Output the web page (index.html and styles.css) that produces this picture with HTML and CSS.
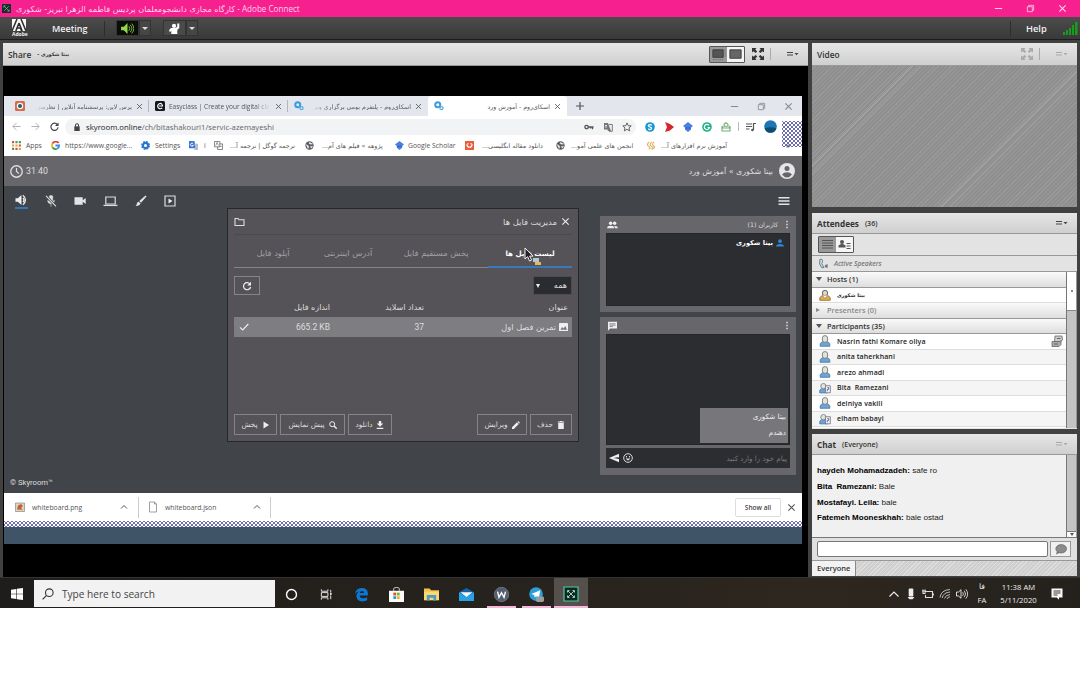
FILE: index.html
```html
<!DOCTYPE html>
<html lang="en">
<head>
    <meta charset="utf-8">
    <title>Adobe Connect</title>
    <link rel="stylesheet" href="styles.css">
</head>
<body>

<!-- shared icons -->
<svg class="defs" width="0" height="0">
    <symbol id="x" viewBox="0 0 10 10"><path d="M1.5 1.5l7 7M8.5 1.5l-7 7" fill="none" stroke="currentColor" stroke-width="1.2"/></symbol>
    <symbol id="min" viewBox="0 0 10 10"><path d="M1 5h8" stroke="currentColor" stroke-width="1.1"/></symbol>
    <symbol id="restore" viewBox="0 0 10 10"><path d="M1.5 3h5.5v5.5H1.5zM3 3V1.5h5.5V7H7" fill="none" stroke="currentColor" stroke-width=".9"/></symbol>
    <symbol id="expand" viewBox="0 0 12 12"><path d="M0 0h4.5L3.3 1.4 5.2 3.5 3.7 5 1.5 3.2 0 4.6zM12 0H7.5l1.2 1.4L6.8 3.5 8.3 5l2.2-1.8L12 4.6zM0 12h4.5l-1.2-1.4 1.9-2.1L3.7 7 1.5 8.8 0 7.4zM12 12H7.5l1.2-1.4-1.9-2.1L8.3 7l2.2 1.8L12 7.4z" fill="currentColor"/></symbol>
    <symbol id="podmenu" viewBox="0 0 12 8"><path d="M0 2h6v1H0zM0 4.6h6v1H0zM7.5 3h4l-2 2.300z" fill="currentColor"/></symbol>
    <symbol id="sky" viewBox="0 0 12 12"><circle cx="4.5" cy="4.5" r="3" fill="none" stroke="#3b9bdc" stroke-width="2.4"/><circle cx="9" cy="8.5" r="1.9" fill="none" stroke="#58aee5" stroke-width="1.5"/></symbol>
    <symbol id="globe" viewBox="0 0 10 10"><circle cx="5" cy="5" r="4.6" fill="#55595d"/><path d="M1 4l2.5 1 .8 2-1 1.6M5 1.2l-.6 1.6 2 .8 2.4-.4M6 6l2.4-.2L7 8z" fill="#eee" stroke="#eee" stroke-width=".5"/></symbol>
    <symbol id="scholar" viewBox="0 0 10 10"><path d="M0 4l5-4 5 4-2 1.6v2L5 10 2 7.6v-2z" fill="#4a7fe0"/><path d="M2.2 6h5.6" stroke="#2c5db5"/></symbol>
    <symbol id="dots" viewBox="0 0 4 12"><path d="M1 1h2v2H1zM1 5h2v2H1zM1 9h2v2H1z" fill="currentColor"/></symbol>
    <symbol id="user" viewBox="0 0 12 12"><path d="M1.2 11.3V8.6L3.3 6.7h5.4l2.1 1.9v2.7z" fill="#6fa3d3" stroke="#4377a8" stroke-width=".8"/><path d="M3.4 3Q3.4.6 6 .6T8.6 3v2Q8.6 7.4 6 7.4T3.4 5z" fill="#e4e2d6" stroke="#737c82" stroke-width=".9"/></symbol>
    <symbol id="userdoc" viewBox="0 0 13 12"><path d="M.8 11.3V8.2L2.6 6.7h4.8l2 2v2.6z" fill="#6fa3d3" stroke="#4377a8" stroke-width=".8"/><circle cx="4.8" cy="4" r="2.9" fill="#e4e2d6" stroke="#737c82" stroke-width=".9"/><path d="M7 3.5h5.3v7.7H7z" fill="#f2f2f7" stroke="#65687a" stroke-width=".8"/><path d="M9 5.5h1.5v2H9v2" fill="none" stroke="#6b5c8c"/></symbol>
    <pattern id="lattice" width="4" height="4" patternUnits="userSpaceOnUse"><path d="M-.5-.5l5 5M4.5-.5l-5 5" stroke="#5252a0" stroke-width=".85"/></pattern>
</svg>

<header class="titlebar">
    <svg class="app-ico" viewBox="0 0 10 10"><path d="M0 0h10v10H0z" fill="#153029"/><path d="M2.5 2.5l5 5M7.5 2.5l-5 5M2 4V2h2M8 6v2H6" fill="none" stroke="#8bb7a7" stroke-width=".8"/></svg>
    <span class="caption"><span class="fa">کارگاه مجازی دانشجومعلمان پردیس فاطمه الزهرا تبریز- شکوری</span> - Adobe Connect</span>
    <div class="win-ctl">
        <svg><use href="#min"/></svg><svg><use href="#restore"/></svg><svg><use href="#x"/></svg>
    </div>
</header>

<nav class="menubar">
    <div class="adobe">
        <svg viewBox="0 0 14 12"><path d="M0 0h14v12H0z" fill="#f7f7f7"/><path d="M5 0L0 12M9 0l5 12M7 4L3.8 12M7 4l3.2 8M5 9h3.5l1 3" fill="none" stroke="#2c2c2c" stroke-width="1.5"/></svg>
        <span>Adobe</span>
    </div>
    <b class="meeting">Meeting</b>
    <i class="sep"></i>
    <div class="tool tool-on">
        <svg viewBox="0 0 14 12"><path d="M0 4h3l4-4v12L3 8H0z" fill="#93d94c"/><path d="M8.5 3.5q2 2.5 0 5M10 2q3.5 4 0 8M11.6.6q4.6 5.4 0 10.8" fill="none" stroke="#7cc53b" stroke-width="1"/></svg>
    </div>
    <div class="drop"></div>
    <div class="tool tool-hand">
        <svg viewBox="0 0 12 12"><circle cx="5.5" cy="3.2" r="2.3" fill="#fff"/><path d="M0 8l2-2.5h5L9 4V.5h2.2v5L9 7.5V12H2.5V8.5L1 10z" fill="#fff"/></svg>
    </div>
    <div class="drop"></div>
    <i class="sep sep-help"></i>
    <b class="help">Help</b>
    <svg class="signal" viewBox="0 0 15 13"><path d="M0 10h2v3H0zM3 8h2v5H3zM6 6h2v7H6zM9 3h2v10H9zM12 0h2.5v13H12z" fill="#189c1b"/></svg>
</nav>

<main class="workspace">

    <section class="pod share">
        <div class="pod-head">
            <span>Share</span><small class="fa share-who" dir="rtl">بیتا شکوری -</small>
            <div class="view-switch">
                <svg class="on" viewBox="0 0 18 16"><path d="M3 3h11v8H3z" fill="#555" stroke="#3c3c3c"/><path d="M3 13.5h12M16 3v8" stroke="#666" stroke-dasharray="1 1"/></svg>
                <svg viewBox="0 0 18 16"><path d="M3 3h12v9H3z" fill="#666" stroke="#3a3a3a"/></svg>
            </div>
            <svg class="expand"><use href="#expand"/></svg>
            <i class="head-sep"></i>
            <svg class="podmenu"><use href="#podmenu"/></svg>
        </div>

        <div class="stage">
        <div class="desktop">
            <div class="tabs">
                <svg viewBox="0 0 10 10"><rect width="10" height="10" rx="1.5" fill="#d9694b"/><circle cx="5" cy="5" r="3.2" fill="#fff"/><circle cx="5" cy="5" r="2.1" fill="#28616c"/></svg>
                <span class="fa fade">پرس لاین: پرسشنامه آنلاین | نظرسن</span>
                <svg class="tx"><use href="#x"/></svg><i></i>
                <svg viewBox="0 0 10 10"><rect width="10" height="10" rx="1.5" fill="#15171a"/><path d="M7 3.3Q5 1.5 3.4 3.4T3.5 7q2 1.6 3.7-.2M4 5h3.4V3.6" fill="none" stroke="#fff" stroke-width="1.1"/></svg>
                <span class="fade-r">Easyclass | Create your digital cla</span>
                <svg class="tx"><use href="#x"/></svg><i></i>
                <svg><use href="#sky"/></svg>
                <span class="fa fade">اسکای‌روم - پلتفرم بومی برگزاری وبی</span>
                <svg class="tx"><use href="#x"/></svg>
                <div class="tab-on">
                    <svg><use href="#sky"/></svg>
                    <span class="fa" dir="rtl">اسکای‌روم - آموزش ورد</span>
                    <svg class="tx"><use href="#x"/></svg>
                </div>
                <svg class="plus" viewBox="0 0 10 10"><path d="M5 1v8M1 5h8" stroke="#555" stroke-width="1.2"/></svg>
                <div class="chrome-ctl"><svg><use href="#min"/></svg><svg><use href="#restore"/></svg><svg><use href="#x"/></svg></div>
            </div>

            <div class="address">
                <svg viewBox="0 0 10 10"><path d="M9.5 5H1M5 1L1 5l4 4" fill="none" stroke="#aaa"/></svg>
                <svg viewBox="0 0 10 10"><path d="M.5 5H9M5 1l4 4-4 4" fill="none" stroke="#aaa"/></svg>
                <svg viewBox="0 0 10 10"><path d="M8.3 3A4 4 0 1 0 9 5.8" fill="none" stroke="#444" stroke-width="1.3"/><path d="M9.5.5v4h-4z" fill="#444"/></svg>
                <div class="pill">
                    <svg class="lock" viewBox="0 0 6 8"><path d="M.3 3.3h5.4V8H.3z" fill="#444"/><path d="M1.5 3.5V2q0-1.3 1.5-1.3T4.5 2v1.5" fill="none" stroke="#444"/></svg>
                    <span class="url">skyroom.online<em>/ch/bitashakouri1/servic-azemayeshi</em></span>
                    <svg class="pi" viewBox="0 0 10 10"><circle cx="2.6" cy="5" r="1.7" fill="none" stroke="#555" stroke-width="1.3"/><path d="M4 5h5.5M8.5 5v2.2M6.500 5v1.5" stroke="#555" stroke-width="1.3"/></svg>
                    <svg class="pi" viewBox="0 0 10 10"><path d="M1 1h4l3 8H5L4.500 7.500H1z" fill="#777"/><path d="M6 2.500h3.300v6.800H6" fill="none" stroke="#777"/><path d="M2 3.500h2M3 3v3" stroke="#fff" stroke-width=".7"/></svg>
                    <svg class="pi" viewBox="0 0 10 10"><path d="M5 .9l1.2 2.8 3 .2L7 5.900l.7 3L5 7.300 2.300 8.900l.7-3L.8 3.900l3-.2z" fill="none" stroke="#555" stroke-width=".9"/></svg>
                </div>
                <div class="exts">
                    <svg viewBox="0 0 10 10"><circle cx="5" cy="5" r="4.8" fill="#1597d3"/><path d="M6.8 3.300Q5.500 2.200 4 2.900t.3 1.800l1.300.5q1.800.9.5 1.900T3.200 6.700" fill="none" stroke="#fff" stroke-width="1.2"/></svg>
                    <svg viewBox="0 0 10 10"><path d="M1 0l5 2 4 3-4 3.500L1 10l2-5z" fill="#d8252b"/></svg>
                    <svg><use href="#scholar"/></svg>
                    <svg viewBox="0 0 10 10"><circle cx="5" cy="5" r="4.8" fill="#1db288"/><path d="M7 3.300A2.600 2.600 0 1 0 7.500 5.500H5.500" fill="none" stroke="#fff" stroke-width="1.2"/></svg>
                    <svg viewBox="0 0 10 10"><path d="M1 4v5h8V4L8 6H2zM3 2.300l2-1.500 2 1.500v2H3z" fill="none" stroke="#73ad78" stroke-width="1.1"/></svg>
                    <i></i>
                    <svg viewBox="0 0 10 10"><path d="M0 2h6M0 4.500h6M0 7h3.500M7.500 8V1.500H10" fill="none" stroke="#555" stroke-width="1.2"/><circle cx="6.4" cy="8" r="1.3" fill="#555"/></svg>
                    <svg class="avatar" viewBox="0 0 13 13"><circle cx="6.500" cy="6.500" r="6.300" fill="#1d76b5"/><path d="M.7 8.200q6-2 11.600 0Q11 12.800 6.500 12.800T.7 8.200" fill="#0e4c74"/></svg>
                </div>
                <svg class="patch"><rect width="20" height="26" fill="url(#lattice)"/></svg>
            </div>

            <div class="bookmarks">
                <svg viewBox="0 0 10 10"><path d="M0 0h2.400v2.400H0zM3.800 7.500h2.400v2.400H3.800zM7.500 3.800h2.400v2.400H7.500z" fill="#d95340"/><path d="M3.800 0h2.400v2.400H3.800zM7.500 0h2.400v2.400H7.500zM0 7.500h2.400v2.400H0z" fill="#4b9b5f"/><path d="M0 3.800h2.400v2.400H0zM3.800 3.800h2.400v2.400H3.800zM7.500 7.500h2.400v2.400H7.500z" fill="#e2a63d"/></svg>
                <span>Apps</span>
                <svg viewBox="0 0 10 10" fill="none" stroke-width="2"><path d="M8.400 2.300A4 4 0 0 0 1.600 3" stroke="#ea4335"/><path d="M1.600 3a4 4 0 0 0 0 4" stroke="#fbbc05"/><path d="M1.600 7a4 4 0 0 0 5.800 1.200" stroke="#34a853"/><path d="M7.400 8.200A4 4 0 0 0 9 5H5" stroke="#4285f4"/></svg>
                <span>https://www.google...</span>
                <svg viewBox="0 0 10 10"><circle cx="5" cy="5" r="2.900" fill="none" stroke="#2577d6" stroke-width="2.400"/><circle cx="5" cy="5" r="4.300" fill="none" stroke="#2577d6" stroke-width="1.300" stroke-dasharray="1.900 1.500"/></svg>
                <span>Settings</span>
                <svg viewBox="0 0 10 10"><path d="M0 0h6l2 8H0z" fill="#3b79d6"/><path d="M6 3h4v7H5l2-2z" fill="#b8bcc4"/><path d="M4.700 3A1.700 1.700 0 1 0 4.800 5H3.300" fill="none" stroke="#fff"/></svg>
                <span>i</span>
                <svg viewBox="0 0 10 10"><path d="M.5.5h6v6h-6zM4 6.500v3h5.500V3.200h-3" fill="none" stroke="#777"/><path d="M2 5l1.400-3.500L5 5M6 6h2.500" fill="none" stroke="#777" stroke-width=".8"/></svg>
                <span class="fa">ترجمه گوگل | ترجمه آ...</span>
                <svg><use href="#globe"/></svg>
                <span class="fa">پژوهه » فیلم های آم...</span>
                <svg><use href="#scholar"/></svg>
                <span>Google Scholar</span>
                <svg viewBox="0 0 10 10"><path d="M0 0h10v10H0z" fill="#e95f3c"/><path d="M2 3.500Q2.300 7 5 7t3-3.500M2.500 3h1.500M6 3h1.500" fill="none" stroke="#fff" stroke-width="1.200"/></svg>
                <span class="fa">دانلود مقاله انگلیسی...</span>
                <svg><use href="#globe"/></svg>
                <span class="fa">انجمن های علمی آمو...</span>
                <svg viewBox="0 0 10 10"><path d="M3.500 1Q0 4 3 6t0 3M6.500 1Q3 4 6 6t0 3M9 1Q6 4 8.500 5.500T6.500 9" fill="none" stroke="#e0ac55" stroke-width="1.200"/></svg>
                <span class="fa">آموزش نرم افزارهای آ...</span>
                <b>»</b>
            </div>

            <div class="sky-head">
                <svg class="clock" viewBox="0 0 12 12"><circle cx="6" cy="6" r="5.300" fill="none" stroke="#e0e0e2" stroke-width="1.200"/><path d="M6 2.700V6l2.200 2" fill="none" stroke="#e0e0e2" stroke-width="1.100"/></svg>
                <span class="timer">31<i>:</i>40</span>
                <span class="fa room" dir="rtl">بیتا شکوری » آموزش ورد</span>
                <svg class="me" viewBox="0 0 16 16"><circle cx="8" cy="8" r="8" fill="#e6e6e8"/><circle cx="8" cy="5.400" r="2.500" fill="#66656a"/><path d="M3 11.600q2-2.400 5-2.400t5 2.400Q11 14.400 8 14.400t-5-2.800" fill="#66656a"/></svg>
            </div>

            <div class="sky-body">
                <div class="sky-tools">
                    <div class="vol"><svg viewBox="0 0 12 12"><path d="M.5 4.200h2.300L6.500 1v10L2.800 7.800H.5z" fill="#eee"/><path d="M8 3.800q2 2.200 0 4.400M8 1.300q5 4.700 0 9.400" fill="none" stroke="#eee" stroke-width="1.200"/></svg></div>
                    <svg viewBox="0 0 12 12"><path d="M4.300 1q1.700-1 3.400 0v5L6 7.500 4.300 6zM2.500 5.500q.5 3.300 3.500 3.300t3.500-3.300M6 9v2.700" fill="#ddd" stroke="#ddd" stroke-width=".6"/><path d="M1 .8l10 10.500" stroke="#41454a" stroke-width="2.400"/><path d="M1 .8l10 10.500" stroke="#ddd" stroke-width="1.100"/></svg>
                    <svg viewBox="0 0 12 12"><path d="M.5 2.200h8.200v3L11.700 3v6L8.700 6.800v3H.5z" fill="#e4e4e6"/></svg>
                    <svg class="wide" viewBox="0 0 15 12"><path d="M2.800 2h9.400v7H2.800z" fill="none" stroke="#ddd" stroke-width="1.200"/><path d="M.5 10.400h14" stroke="#ddd" stroke-width="1.300"/></svg>
                    <svg viewBox="0 0 12 12"><path d="M4.300 6L10.500.6l1 1L6 7.800zM3.700 6.700l1.900 1.800Q4.600 11.300.5 10.800q1.300-.5 1.300-2.100t1.900-2" fill="#e4e4e6"/></svg>
                    <svg viewBox="0 0 12 12"><path d="M1 1h10v10H1z" fill="none" stroke="#ddd" stroke-width="1.200"/><path d="M4.500 3.500v5L8.500 6z" fill="#eee"/></svg>
                    <svg class="burger" viewBox="0 0 12 12"><path d="M.5 2.700h11M.5 6h11M.5 9.300h11" stroke="#e4e4e6" stroke-width="1.400"/></svg>
                </div>

                <div class="sky-main">
                    <div class="modal">
                        <div class="m-title">
                            <svg viewBox="0 0 11 10"><path d="M1 1.500h3l1 1.300h5v5.700H1z" fill="none" stroke="#ddd" stroke-width="1.100"/></svg>
                            <span class="fa">مدیریت فایل ها</span>
                            <svg class="m-x"><use href="#x"/></svg>
                        </div>
                        <div class="m-tabs fa">
                            <span>آپلود فایل</span><span>آدرس اینترنتی</span><span>پخش مستقیم فایل</span><span class="on">لیست فایل ها</span>
                            <svg class="cursor" viewBox="0 0 18 20"><path d="M1 1v11l2.600-2.300 2 4.400 2-1-2-4H9z" fill="#222" stroke="#eee" stroke-width="1"/><path d="M9 11h6v4H9z" fill="#b6c6d2"/><path d="M11 15h6v3h-6z" fill="#e6b95e"/></svg>
                        </div>
                        <div class="m-filter">
                            <div class="refresh"><svg viewBox="0 0 10 10"><path d="M8 3A3.600 3.600 0 1 0 8.600 6" fill="none" stroke="#eee" stroke-width="1.200"/><path d="M9 .8v3.800H5.200z" fill="#eee"/></svg></div>
                            <div class="select"><i></i><span class="fa">همه</span></div>
                        </div>
                        <div class="m-row m-cols fa"><i></i><span>اندازه فایل</span><span>تعداد اسلاید</span><span>عنوان</span></div>
                        <div class="m-row m-item">
                            <svg viewBox="0 0 10 10"><path d="M1 5.300L3.700 8 9.300 2" fill="none" stroke="#eee" stroke-width="1.100"/></svg>
                            <span>665.2 KB</span><span>37</span>
                            <span class="fa">تمرین فصل اول</span>
                            <svg viewBox="0 0 10 10"><rect y=".5" width="10" height="9" rx="1" fill="#efeff1"/><path d="M1.500 8l2-3 1.500 1.700L7 4l2 4z" fill="#77767b"/></svg>
                        </div>
                        <div class="m-foot fa">
                            <div class="btn f1"><span>پخش</span><svg viewBox="0 0 8 8"><path d="M1.500.5v7L7 4z" fill="#eee"/></svg></div>
                            <div class="btn f2"><span>پیش نمایش</span><svg viewBox="0 0 8 8"><circle cx="3.200" cy="3.200" r="2.500" fill="none" stroke="#eee"/><path d="M5 5l2.700 2.700" stroke="#eee" stroke-width="1.300"/></svg></div>
                            <div class="btn f3"><span>دانلود</span><svg viewBox="0 0 8 8"><path d="M2.800 0h2.400v2.500H7.300L4 5.800.7 2.500h2.100zM.7 6.800h6.600V8H.7z" fill="#eee"/></svg></div>
                            <div class="btn f4"><span>ویرایش</span><svg viewBox="0 0 8 8"><path d="M0 6.200L5 1.200 6.800 3l-5 5H0zM5.500.7l.7-.7L8 1.800l-.7.7z" fill="#eee"/></svg></div>
                            <div class="btn f5"><span>حذف</span><svg viewBox="0 0 8 8"><path d="M.8.5h2l.5-.5h1.400l.5.5h2v1H.8zM1.200 2h5.600v6H1.200z" fill="#eee"/></svg></div>
                        </div>
                    </div>

                    <aside class="side">
                        <div class="box users">
                            <div class="box-head">
                                <svg class="grp" viewBox="0 0 12 10"><circle cx="4" cy="3" r="1.900" fill="#eee"/><circle cx="8.300" cy="3" r="1.900" fill="#eee"/><path d="M.2 8.500q0-2.600 3.800-2.600t3.800 2.600zM8.600 8.500q0-1.600-.8-2.500 4-.2 4 2.500z" fill="#eee"/></svg>
                                <span class="fa" dir="rtl">کاربران (1)</span>
                                <svg class="dots"><use href="#dots"/></svg>
                            </div>
                            <div class="well fa">
                                <b>بیتا شکوری</b>
                                <svg viewBox="0 0 8 8"><circle cx="4" cy="2.200" r="1.900" fill="#2d86d6"/><path d="M0 7.600q0-2.700 4-2.700t4 2.700z" fill="#2d86d6"/></svg>
                            </div>
                        </div>
                        <div class="box talk">
                            <div class="box-head">
                                <svg class="grp" viewBox="0 0 10 10"><path d="M.5.8h9v6.700H2.600L.5 9.700z" fill="#efeff1"/><path d="M2 2.800h6M2 4.200h6M2 5.600h3.500" stroke="#67676b" stroke-width=".7"/></svg>
                                <svg class="dots"><use href="#dots"/></svg>
                            </div>
                            <div class="well talk-well"><div class="bubble fa"><span>بیتا شکوری</span><span>دهندم</span></div></div>
                            <div class="entry fa">
                                <svg viewBox="0 0 10 10"><path d="M10 .8v8.400L0 5zM4.500 5l5.500.9V4z" fill="#eee"/></svg>
                                <svg viewBox="0 0 10 10"><circle cx="5" cy="5" r="4.300" fill="none" stroke="#ddd" stroke-width="1"/><path d="M2.600 5.600q2.400 3.600 4.800 0z" fill="#ddd"/><path d="M3.500 3v1.400M6.500 3v1.400" stroke="#ddd"/></svg>
                                <span>پیام خود را وارد کنید</span>
                            </div>
                        </div>
                    </aside>
                </div>
                <div class="copy">© Skyroom™</div>
            </div>

            <div class="downloads">
                <div class="dl">
                    <svg viewBox="0 0 10 10"><path d="M.5 1h9v8.500h-9z" fill="#ddd5c7" stroke="#888" stroke-width=".7"/><path d="M2 7.500l1-4 3-1.400 2 2-2 2 2 1.600z" fill="#c4622c"/></svg>
                    <span>whiteboard.png</span>
                    <svg class="up" viewBox="0 0 8 8"><path d="M1 5.500l3-3 3 3" fill="none" stroke="#555"/></svg>
                </div>
                <div class="dl dl-2">
                    <svg viewBox="0 0 10 12"><path d="M1.500 1h5l2 2v8h-7zM6.500 1v2h2" fill="#fff" stroke="#888" stroke-width=".8"/></svg>
                    <span>whiteboard.json</span>
                    <svg class="up" viewBox="0 0 8 8"><path d="M1 5.500l3-3 3 3" fill="none" stroke="#555"/></svg>
                </div>
                <div class="show-all">Show all</div>
                <svg class="dl-x"><use href="#x"/></svg>
            </div>
            <svg class="lattice-strip"><rect width="800" height="6" fill="url(#lattice)"/></svg>
        </div>
        </div>
    </section>

    <div class="column">
        <section class="pod video">
            <div class="pod-head">
                <span>Video</span>
                <svg class="expand dim"><use href="#expand"/></svg>
                <i class="head-sep"></i>
                <svg class="podmenu dim"><use href="#podmenu"/></svg>
            </div>
            <div class="no-video"></div>
        </section>

        <section class="pod attendees">
            <div class="pod-head bold"><span>Attendees</span><small>(36)</small><svg class="podmenu"><use href="#podmenu"/></svg></div>
            <div class="att-tools">
                <div class="view-switch">
                    <svg class="on" viewBox="0 0 17 15"><path d="M3 3.500h11M3 6h11M3 8.500h11M3 11h11" stroke="#555"/></svg>
                    <svg viewBox="0 0 17 15"><circle cx="6" cy="5" r="2" fill="#555"/><path d="M2.500 10.500V8.600L5 7h2l2.500 1.600v1.900zM10.500 6h4v1h-4zM10.500 8.500h4v1h-4zM10.500 11h4v1h-4z" fill="#555"/></svg>
                </div>
            </div>
            <div class="speakers"><svg viewBox="0 0 12 12"><path d="M2 1.500Q5 .5 5 3T4 6l2.500 4.500H4Q.5 7 2 1.500z" fill="#cfdae2" stroke="#61788a"/><path d="M7.500 8l3-1.500V11L7.500 10z" fill="#777"/></svg><em>Active Speakers</em></div>
            <div class="list">
                <div class="rows">
                    <div class="group"><i class="open"></i>Hosts (1)</div>
                    <div class="person"><svg viewBox="0 0 12 12"><path d="M.8 11.300V8.600L3.300 6.500h5.400l2.500 2.100v2.700z" fill="#e3ae4a" stroke="#8c6423" stroke-width=".8"/><circle cx="6" cy="4" r="2.700" fill="#ded9c5" stroke="#666"/><path d="M3.200 6.500l2.800 3 2.800-3" fill="#fff" stroke="#765" stroke-width=".7"/></svg><span class="fa host">بیتا شکوری</span></div>
                    <div class="group muted"><i></i>Presenters (0)</div>
                    <div class="group"><i class="open"></i>Participants (35)</div>
                    <div class="person"><svg><use href="#user"/></svg><span>Nasrin fathi Komare oliya</span>
                        <svg class="phone" viewBox="0 0 12 12"><path d="M4 1h7l.5 4-2.500 2H3.500z" fill="#ccc" stroke="#666" stroke-width=".8"/><path d="M1 6.500h8l1-1v4l-2 2H1z" fill="#aaa" stroke="#666" stroke-width=".8"/><path d="M6 3.500h3.500M3 9h4" stroke="#666"/></svg></div>
                    <div class="person alt"><svg><use href="#user"/></svg><span>anita taherkhani</span></div>
                    <div class="person"><svg><use href="#user"/></svg><span>arezo ahmadi</span></div>
                    <div class="person alt"><svg><use href="#userdoc"/></svg><span>Bita&nbsp; Ramezani</span></div>
                    <div class="person"><svg><use href="#user"/></svg><span>delniya vakili</span></div>
                    <div class="person alt"><svg><use href="#userdoc"/></svg><span>elham babayi</span></div>
                </div>
                <div class="scroll"><div class="thumb"></div></div>
            </div>
        </section>

        <section class="pod chat">
            <div class="pod-head bold"><span>Chat</span><small>(Everyone)</small><svg class="podmenu dim"><use href="#podmenu"/></svg></div>
            <div class="chat-body">
                <div class="messages">
                    <p><b>haydeh Mohamadzadeh:</b> safe ro</p>
                    <p><b>Bita&nbsp; Ramezani:</b> Bale</p>
                    <p><b>Mostafayi. Leila:</b> bale</p>
                    <p><b>Fatemeh Mooneskhah:</b> bale ostad</p>
                </div>
                <div class="scroll scroll-end"><div class="arrow"></div></div>
            </div>
            <div class="chat-input">
                <div class="field"></div>
                <div class="send"><svg viewBox="0 0 12 11"><ellipse cx="6.200" cy="4.800" rx="5.400" ry="4.200" fill="#8b8b8b" stroke="#555" stroke-width=".6"/><path d="M2 7l-1 3.500L5 8.800z" fill="#777"/></svg></div>
            </div>
            <div class="chat-tabs"><span>Everyone</span></div>
        </section>
    </div>
</main>

<footer class="taskbar">
    <div class="start"><svg viewBox="0 0 12 12"><path d="M0 1.700l5.400-.8v4.800H0zM6 .8l6-.8v5.700H6zM0 6.300h5.400v4.800L0 10.300zM6 6.300h6V12l-6-.8z" fill="#fff"/></svg></div>
    <div class="search">
        <svg viewBox="0 0 12 12"><circle cx="7.300" cy="4.700" r="3.800" fill="none" stroke="#333" stroke-width="1.100"/><path d="M4.600 7.400L.6 11.400" stroke="#333" stroke-width="1.200"/></svg>
        <span>Type here to search</span>
    </div>
    <div class="apps">
        <div><svg viewBox="0 0 16 16"><circle cx="8" cy="8" r="5.300" fill="none" stroke="#fff" stroke-width="1.500"/></svg></div>
        <div><svg viewBox="0 0 16 16"><path d="M2.500 2.500v2h7v-2M2.500 13.500v-2h7v2M2.500 6h7v4h-7zM12.500 3v3M12.500 9v4" fill="none" stroke="#eee"/><path d="M11.700 6.500h1.800v1.800h-1.800z" fill="#fff"/></svg></div>
        <div><svg viewBox="0 0 16 16"><path d="M1 7.500Q2 1 8.200 1q6.600 0 6.600 6v2H6q.3 3 3.800 3 2.400 0 4.200-1v3.200Q12 15.400 9 15.400q-6.400 0-6.400-5.800 0-3.600 3.600-5.200Q2.800 4.600 1 7.500zM6.200 6.500h4.600q0-2.300-2.200-2.300T6.200 6.500z" fill="#0d78d4" fill-rule="evenodd"/></svg></div>
        <div><svg viewBox="0 0 16 16"><path d="M0 4h16v12H0z" fill="#fafafa"/><path d="M5 4V2q0-1.500 3-1.500T11 2v2" fill="none" stroke="#ddd"/><path d="M4.600 6h3v3h-3z" fill="#e2502e"/><path d="M8.400 6h3v3h-3z" fill="#78b332"/><path d="M4.600 9.800h3v3h-3z" fill="#26a0da"/><path d="M8.400 9.800h3v3h-3z" fill="#f2b520"/></svg></div>
        <div><svg viewBox="0 0 16 16"><path d="M0 1.500h6l1.500 2H16V14H0z" fill="#f3c14d"/><path d="M0 5h16v9H0z" fill="#fbd870"/><path d="M3 14.500V8.500h10v6h-3v-3H6v3z" fill="#4c9dbf"/></svg></div>
        <div><svg viewBox="0 0 16 16"><path d="M0 5.500L8 1l8 4.500V15H0z" fill="#1263a9"/><path d="M1.500 5.500h13L8 11z" fill="#f2f7fb"/><path d="M0 5.700l8 5.500 8-5.500V15H0z" fill="#27a2ea"/></svg></div>
        <div class="run"><svg viewBox="0 0 16 16"><circle cx="8" cy="8" r="7.700" fill="#535d6f" stroke="#8d95a2" stroke-width=".6"/><path d="M3.800 5l1.500 6L8 6l2.700 5 1.600-6" fill="none" stroke="#fff" stroke-width="1.500"/></svg></div>
        <div class="run"><svg viewBox="0 0 16 16"><circle cx="7.500" cy="7.500" r="7.300" fill="#2b9fd9"/><path d="M2.500 7.500L12 3.500 10.500 12 7.500 9.800 6 11.300 5.500 8.600z" fill="#fff"/><rect x="7.500" y="10" width="8.500" height="6" rx="1.500" fill="#9a9c9e"/></svg></div>
        <div class="run active"><svg viewBox="0 0 16 16"><path d="M1 1h14v14H1z" fill="#0a2a22" stroke="#52c79f" stroke-width="1.200"/><path d="M5 5l6 6M11 5l-6 6M4.500 6.500v-2h2M11.500 6.500v-2h-2M4.500 9.500v2h2M11.500 9.500v2h-2" fill="none" stroke="#b4dccd" stroke-width=".9"/></svg></div>
    </div>
    <div class="tray">
        <svg viewBox="0 0 12 12"><path d="M1.500 8.500L6 4l4.500 4.500" fill="none" stroke="#eee" stroke-width="1.100"/></svg>
        <svg viewBox="0 0 12 12"><rect x="3.700" y=".5" width="4.600" height="8" rx="1" fill="#eee"/><path d="M2.500 9h7l-2 2.300h-3z" fill="#eee"/></svg>
        <svg viewBox="0 0 12 12"><path d="M3.500 3.500h7v6h-7V7M11.700 5.500v2M0 3h4M1 1.500v4h2v-4" fill="none" stroke="#ddd" stroke-width="1.100"/></svg>
        <svg viewBox="0 0 12 12"><path d="M1 9.500Q2 2 11 1.500M3.200 10q1-5.500 8-6M5.500 10.500Q6.500 7 11 6.500M8 11q.6-2 3-2.200" fill="none" stroke="#bbb" stroke-width="1"/></svg>
        <svg viewBox="0 0 12 12"><path d="M.5 4h2L5 1.700v8.600L2.500 8h-2z" fill="none" stroke="#eee" stroke-width=".9"/><path d="M6.700 4.200q1.400 1.800 0 3.600M8.300 2.700q2.500 3.300 0 6.600M9.900 1.300q3.500 4.700 0 9.400" fill="none" stroke="#ddd" stroke-width=".9"/></svg>
        <div class="lang"><span class="fa">فا</span><span>FA</span></div>
        <div class="time"><span>11:38 AM</span><span>5/11/2020</span></div>
        <svg class="note" viewBox="0 0 12 12"><path d="M.5.500h11v9H8v2.300L5.700 9.500H.5z" fill="#fafafa"/><path d="M2.500 3h7M2.500 5h7M2.500 7h4" stroke="#26221e" stroke-width=".9"/></svg>
    </div>
</footer>

</body>
</html>
```
FILE: styles.css
```css
* { box-sizing: border-box; }

body
{
    margin: 0;
    width: 1080px;
    height: 675px;
    overflow: hidden;
    background: #fff;
    font-family: "Open Sans", "DejaVu Sans", sans-serif;
    font-size: 7px;
    color: #333;
    white-space: nowrap;
}

svg { display: block; flex: none; overflow: hidden; }
i { font-style: normal; }
.defs { position: absolute; }
.fa { font-family: "DejaVu Sans", sans-serif; }

/* window frame */
.titlebar
{
    display: flex;
    align-items: center;
    height: 17px;
    padding-left: 2px;
    background: #f7208f;
    color: #ffd3ea;
}
.app-ico { width: 9px; height: 9px; margin-right: 5px; }
.caption { font-size: 8.1px; }
.win-ctl { display: flex; gap: 23px; margin-left: auto; padding-right: 13px; color: #ffd3ea; }
.win-ctl svg { width: 9px; height: 9px; }

.menubar
{
    display: flex;
    align-items: center;
    height: 23px;
    padding-left: 12px;
    background: linear-gradient(#4c4c4c, #393939);
    border-bottom: 1px solid #1c1c1c;
    color: #f2f2f2;
}
.adobe { width: 40px; font-size: 5px; line-height: 5px; font-weight: 700; }
.adobe svg { width: 14px; height: 12px; margin-bottom: 1px; }
.meeting { width: 52px; font-size: 9px; font-weight: 600; }
.sep { width: 1px; height: 15px; background: #2d2d2d; }
.tool
{
    display: flex;
    align-items: center;
    justify-content: center;
    width: 23px;
    height: 16px;
    background: #4a4a4a;
    border: 1px solid #343434;
}
.tool svg { width: 13px; height: 11px; }
.tool-on { margin-left: 11px; background: #0b0d08; }
.tool-hand { margin-left: 12px; }
.drop { width: 12px; height: 16px; padding: 6px 0 0 2px; background: #464646; border: 1px solid #343434; }
.drop::after { content: ""; display: block; width: 0; border: 3px solid transparent; border-top-color: #ddd; border-bottom: 0; }
.sep-help { margin-left: auto; }
.help { width: 37px; margin-left: 15px; font-size: 9.3px; font-weight: 600; }
.signal { width: 15px; height: 13px; margin-right: 2px; }

/* pods */
.workspace { display: flex; gap: 4px; height: 537px; padding: 3px 3px 0; background: #414141; }
.pod-head
{
    display: flex;
    align-items: center;
    height: 23px;
    padding: 0 9px 0 5px;
    background: linear-gradient(#e6e6e6, #cfcfcf);
    border-bottom: 1px solid #999;
    font-size: 8.4px;
    font-weight: 600;
    color: #333;
}
.pod-head small { margin-left: 6px; font-size: 7px; }
.pod-head .share-who { margin-left: 6px; font-size: 5px; font-weight: 700; }
.expand { width: 12px; height: 12px; margin-left: 7px; color: #333; }
.video .expand { margin-left: auto; }
.head-sep { width: 1px; height: 12px; margin: 0 16px 0 6px; background: #aaa; }
.podmenu { width: 12px; height: 8px; color: #444; }
.pod-head .dim { color: #aaa; }
.view-switch { display: flex; border: 1px solid #555; border-radius: 1px; background: #f5f5f5; }
.view-switch svg { width: 17px; height: 15px; }
.view-switch .on { background: #999; }
.share { width: 805px; }
.share .view-switch { margin-left: auto; }
.stage { height: 511px; padding: 30px 0 0 1px; background: #000; }
.desktop { width: 798px; height: 448px; background: #3f5467; }

/* browser tabs */
.tabs
{
    display: grid;
    grid-template-columns: 17px 104px 12px 7px 14px 106px 12px 7px 15px 106px 13px 139px 1fr auto;
    align-items: center;
    height: 20px;
    padding-left: 11px;
    background: #e3e6ed;
    color: #555;
    font-size: 6.5px;
}
.tabs svg { width: 10px; height: 10px; }
.tabs .tx { width: 7px; height: 7px; }
.tabs > i { width: 1px; height: 12px; background: #b4b7bd; }
.tabs .fa { font-size: 6.2px; }
.tabs > span { width: max-content; }
.tabs > .fa { justify-self: end; margin-right: 4px; }
.fade { direction: rtl; mask-image: linear-gradient(to left, #000 80%, transparent); }
.fade-r { mask-image: linear-gradient(to right, #000 85%, transparent); }
.tab-on { display: flex; align-items: center; align-self: stretch; padding: 0 6px; background: #fff; border-radius: 4px 4px 0 0; }
.tab-on span { margin: 0 4px 0 auto; }
.tabs .plus { margin-left: 8px; }
.chrome-ctl { display: flex; gap: 18px; padding-right: 9px; color: #888; }
.chrome-ctl svg { width: 9px; height: 9px; }

.address { position: relative; display: flex; align-items: center; gap: 10px; height: 21px; padding-left: 8px; background: #fff; }
.address > svg { width: 9px; height: 9px; }
.pill { display: flex; align-items: center; width: 571px; height: 16px; margin-left: -4px; padding: 0 4px 0 9px; background: #f1f3f4; border-radius: 8px; }
.lock { width: 6px; height: 8px; margin-right: 6px; }
.url { margin-right: auto; font-size: 7.75px; color: #222; }
.url em { font-style: normal; color: #666; }
.pi { width: 10px; height: 10px; margin-left: 9px; }
.exts { display: flex; align-items: center; gap: 9px; margin-left: -1px; }
.exts svg { width: 10px; height: 10px; }
.exts i { width: 1px; height: 9px; margin: 0 -2px; background: #bbb; }
.exts .avatar { width: 13px; height: 13px; margin-left: -1px; }
/* leftover lattice painted over the end of the toolbar */
.address .patch { position: absolute; left: 778px; top: 5px; width: 20px; height: 26px; }

.bookmarks
{
    display: grid;
    grid-template-columns: 14px 25px 14px 76px 14px 34px 15px 10px 16px 75px 17px 73px 13px 57px 17px 74px 15px 75px 15px 125px 10px;
    align-items: center;
    height: 19px;
    padding: 0 0 2px 8px;
    background: #fff;
    color: #555;
    font-size: 6.8px;
}
.bookmarks svg { width: 9px; height: 9px; }
.bookmarks span { width: max-content; }
.bookmarks .fa { direction: rtl; font-size: 6.4px; }

/* room header */
.sky-head { display: flex; align-items: center; height: 30px; padding: 0 7px 0 6px; background: #67666b; color: #dededf; }
.clock { width: 13px; height: 13px; margin-right: 3px; }
.timer { font-family: Roboto, sans-serif; font-size: 8.8px; margin-right: auto; }
.timer i { opacity: .35; }
.room { font-size: 7.9px; }
.me { width: 16px; height: 16px; margin-left: 6px; }

.sky-body { display: flex; flex-direction: column; height: 307px; background: #41454a; color: #ddd; }
.sky-tools { display: flex; align-items: center; gap: 17px; height: 22px; padding: 7px 12px 0 11px; }
.sky-tools svg { width: 12px; height: 12px; }
.sky-tools .wide { width: 15px; }
.vol { width: 13px; height: 16px; padding-top: 1px; border-bottom: 2px solid #2d79bd; }
.sky-tools .burger { margin-left: auto; }
.sky-main { display: flex; height: 268px; padding: 0 6px 0 223px; }
.modal { width: 352px; height: 234px; padding: 0 6px; background: #555358; border: 1px solid #25272a; }

.m-title { display: flex; align-items: center; height: 26px; border-bottom: 1px solid #4a494e; font-size: 8.4px; }
.m-title svg { width: 11px; height: 10px; }
.m-title span { margin-left: auto; }
.m-title .m-x { width: 9px; height: 9px; margin: 0 2px 0 4px; color: #eee; }
.m-tabs
{
    position: relative;
    display: grid;
    grid-template-columns: 78px 72px 104px 84px;
    height: 33px;
    text-align: center;
    border-bottom: 1px solid #85848a;
    color: #a09fa5;
    font-size: 8.3px;
    line-height: 37px;
}
.m-tabs .on { height: 33px; border-bottom: 2px solid #3a78bb; color: #fff; font-size: 7.1px; font-weight: 700; }
.cursor { position: absolute; left: 290px; top: 12px; width: 18px; height: 20px; }
.m-filter { display: flex; justify-content: space-between; margin-top: 8px; height: 19px; }
.refresh, .btn { display: flex; align-items: center; justify-content: center; border: 1px solid #858489; }
.refresh { width: 26px; }
.refresh svg { width: 10px; height: 10px; }
.select { display: flex; align-items: center; justify-content: space-between; width: 39px; padding: 0 4px 0 2px; background: #2a2c30; border: 1px solid #4b4b50; font-size: 8px; }
.select i { border: 2px solid transparent; border-top: 4px solid #eee; border-bottom: 0; }
.m-row { display: grid; align-items: center; height: 20px; }
.m-cols { grid-template-columns: 40px 56px 94px 144px; margin-top: 2px; text-align: right; font-size: 8px; }
.m-item { grid-template-columns: 38px 53px 94px 132px 16px; padding-left: 5px; background: #7e7d82; font-family: Roboto, sans-serif; font-size: 8.5px; text-align: right; }
.m-item svg { width: 10px; height: 10px; }
.m-item svg:last-child { margin-left: 3px; width: 9px; }
.m-item .fa { font-size: 8.2px; }
.m-foot { display: flex; gap: 3px; margin-top: 77px; height: 21px; font-size: 7.4px; }
.btn { gap: 4px; }
.btn svg { width: 8px; height: 8px; }
.f1 { width: 43px; }
.f2 { width: 65px; }
.f3 { width: 44px; }
.f4 { width: 50px; margin-left: auto; }
.f5 { width: 42px; }

.side { width: 196px; margin: 8px 0 0 21px; }
.box { padding: 0 6px; background: #67676b; }
.users { height: 96px; }
.talk { height: 158px; margin-top: 5px; }
.box-head { display: flex; align-items: center; height: 17px; font-size: 6.3px; }
.box-head span { margin-left: auto; }
.grp { width: 11px; height: 10px; margin-left: 1px; }
.dots { width: 4px; height: 9px; margin: 0 1px 0 7px; }
.talk .dots { margin-left: auto; }
.well { display: flex; justify-content: flex-end; height: 73px; padding: 5px 5px; background: #2b2d31; border: 1px solid #242629; color: #fff; }
.well svg { width: 8px; height: 8px; margin-left: 3px; }
.well b { font-size: 6.6px; line-height: 9px; }
.talk-well { height: 111px; align-items: flex-end; padding: 1px; }
.bubble { display: flex; flex-direction: column; gap: 6px; width: 88px; height: 35px; padding: 4px 2px; background: #77767b; text-align: right; font-size: 7.1px; line-height: 10px; color: #eee; }
.entry { display: flex; align-items: center; gap: 4px; height: 20px; margin-top: 3px; padding: 0 3px; background: #2b2d31; font-size: 7.2px; color: #77777b; }
.entry svg { width: 10px; height: 10px; }
.entry span { margin-left: auto; }
.copy { padding: 2px 0 0 6px; font-family: Roboto, sans-serif; font-size: 7.7px; line-height: 10px; }

.downloads { display: flex; align-items: center; height: 28px; background: #fff; color: #555; }
.dl { display: flex; align-items: center; width: 135px; height: 21px; padding: 0 10px 0 11px; border-right: 1px solid #ccc; font-size: 6.8px; }
.dl-2 { width: 132px; padding: 0 9px; }
.dl span { margin: 0 auto 0 7px; }
.dl svg { width: 10px; height: 12px; }
.dl .up { width: 8px; height: 8px; }
.show-all { width: 46px; height: 19px; margin-left: auto; border: 1px solid #ddd; border-radius: 2px; line-height: 17px; text-align: center; font-weight: 600; color: #444; font-size: 6.6px; }
.dl-x { width: 9px; height: 9px; margin: 0 6px 0 6px; }
.lattice-strip { width: 798px; height: 6px; background: #fff; }

/* right column */
.column { width: 265px; }
.no-video
{
    height: 141px;
    background:
        repeating-linear-gradient(135deg, transparent 0 70px, rgba(255,255,255,.12) 70px 72px, transparent 72px 76px, rgba(255,255,255,.12) 76px 77px, transparent 77px 120px),
        repeating-linear-gradient(135deg, #8f8f8f 0 2px, #999 2px 3px);
}
.attendees { height: 216px; margin-top: 6px; background: #e3e3e3; }
.attendees .pod-head, .chat .pod-head { height: 21px; }
.bold { font-weight: 700; font-size: 8.2px; }
.bold small { font-weight: 600; }
.bold .podmenu { margin-left: auto; }
.att-tools { display: flex; align-items: center; height: 22px; padding-left: 6px; border-bottom: 1px solid #999; }
.speakers { display: flex; align-items: center; height: 16px; padding-left: 6px; border-bottom: 1px solid #999; font-size: 6.7px; font-weight: 600; color: #777; }
.speakers svg { width: 11px; height: 11px; margin-right: 5px; }
.list { display: flex; height: 156px; background: #fff; }
.rows { width: 254px; }
.group, .person { display: flex; align-items: center; height: 15.5px; }
.group { padding-left: 4px; background: linear-gradient(#fafafa, #dedede); border-bottom: 1px solid #999; font-weight: 600; font-size: 7.4px; }
.group i { width: 6px; margin-right: 5px; border: 2px solid transparent; border-left: 4px solid #888; border-right: 0; }
.group .open { width: 0; margin-right: 5px; border: 3px solid transparent; border-top: 4px solid #555; border-bottom: 0; }
.muted { color: #888; }
.person { padding: 0 3px 0 7px; border-bottom: 1px solid #ddd; font-size: 7px; font-weight: 600; color: #222; }
.person svg { width: 12px; height: 12px; }
.person span { margin-left: 6px; letter-spacing: .1px; }
.person .host { font-size: 5px; font-weight: 700; letter-spacing: 0; }
.person .phone { margin-left: auto; }
.alt { background: #f5f5f5; }
.scroll { width: 11px; background: #c4c4c4; border-left: 1px solid #777; border-right: 1px solid #999; }
.thumb { height: 39px; background: #fff; border-bottom: 1px solid #888; }
.thumb::after { content: ""; display: block; width: 2px; height: 2px; margin: 0 auto; background: #888; transform: translateY(18px); }

.chat { height: 142px; margin-top: 5px; background: #e0e0e0; }
.chat-body { display: flex; height: 83px; background: #f0f0f0; border-bottom: 1px solid #777; }
.messages { width: 254px; padding: 8px 0 0 5px; font-family: "Liberation Sans", sans-serif; font-size: 8.1px; line-height: 15.8px; color: #222; }
.messages p { margin: 0; }
.messages b { font-size: 8px; color: #000; }
.scroll-end { display: flex; align-items: flex-end; }
.arrow { width: 9px; height: 6px; background: #fafafa; border-top: 1px solid #777; }
.arrow::after { content: ""; display: block; width: 0; margin: 1px auto; border: 2px solid transparent; border-top: 3px solid #555; border-bottom: 0; }
.chat-input { display: flex; align-items: center; gap: 2px; height: 22px; padding: 0 5px; }
.field { width: 231px; height: 16px; background: #fff; border: 1px solid #777; border-radius: 2px; }
.send { display: flex; align-items: center; justify-content: center; width: 21px; height: 16px; background: #f0f0f0; border: 1px solid #999; }
.send svg { width: 12px; height: 11px; }
.chat-tabs { display: flex; height: 16px; border-top: 1px solid #999; background: repeating-linear-gradient(135deg, #cfcfcf 0 2px, #dedede 2px 3px); }
.chat-tabs span { width: 44px; padding-left: 5px; background: #f2f2f2; border-right: 1px solid #888; font-weight: 600; font-size: 7.5px; line-height: 15px; }

/* windows taskbar */
.taskbar { display: flex; height: 31px; background: linear-gradient(90deg, #1f1d1b, #29241e 60%, #2e271f 75%, #24211d); color: #eee; border-top: 1px solid #333; }
.start { width: 34px; padding: 10px 0 0 11px; }
.start svg { width: 12px; height: 12px; }
.search { display: flex; align-items: center; gap: 8px; width: 241px; margin: 2px 0 1px; padding-left: 8px; background: #f2f2f2; color: #444; font-size: 10.1px; }
.search svg { width: 12px; height: 12px; }
.apps { display: flex; margin-left: -1px; }
.apps div { display: flex; align-items: center; justify-content: center; width: 35px; padding-top: 2px; }
.apps svg { width: 15px; height: 15px; }
.apps .run { width: 29px; margin: 0 3px; padding-top: 4px; border-bottom: 2px solid #f5b8da; }
.apps .active { width: 34px; margin: 0; background: #55504c; }
.active svg { width: 16px; height: 16px; }
.tray { display: flex; align-items: center; margin-left: auto; gap: 5px; padding: 1px 17px 0 0; }
.tray svg { width: 12px; height: 12px; }
.lang, .time { display: flex; flex-direction: column; align-items: center; font-size: 7.7px; line-height: 12.5px; }
.lang { width: 18px; }
.time { width: 45px; }
.tray .note { margin-left: 5px; }
```
